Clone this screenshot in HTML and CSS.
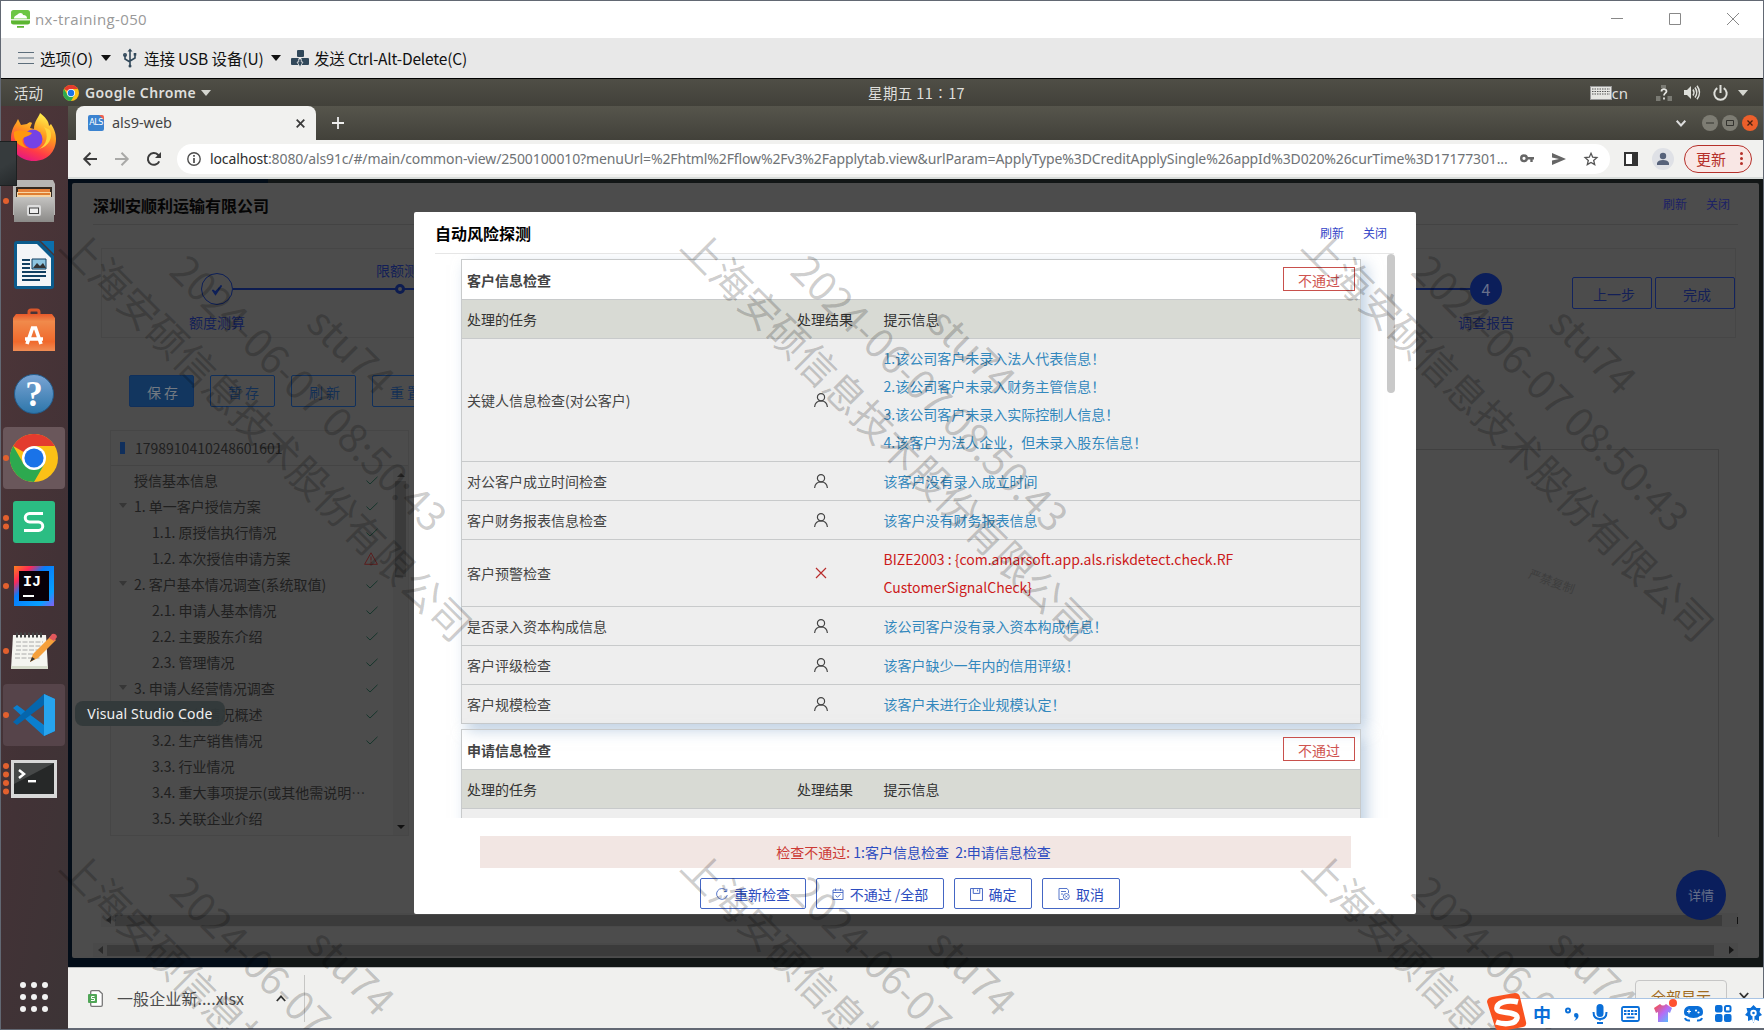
FILE: index.html
```html
<!DOCTYPE html>
<html lang="zh-CN">
<head>
<meta charset="utf-8">
<title>nx-training-050</title>
<link rel="stylesheet" href="styles.css">
</head>
<body>
<svg width="0" height="0" class="defs">
  <defs>
    <symbol id="user" viewBox="0 0 14 14"><circle cx="7" cy="4.2" r="3.6"/><path d="M.6 14c.2-3.600 2.700-6.200 6.400-6.200s6.200 2.600 6.400 6.200"/></symbol>
    <symbol id="tick" viewBox="0 0 12 9"><path d="M.5 4.6 4 8 11.5.8"/></symbol>
    <symbol id="chrome" viewBox="0 0 48 48"><circle cx="24" cy="24" r="24" fill="#fbc116"/><path d="M24 24 3.2 12A24 24 0 0 1 44.8 12L24 12z" fill="#e33b2e"/><path d="M3.2 12A24 24 0 0 0 24 48L34.4 30 24 24 13.6 30z" fill="#2da94f"/><circle cx="24" cy="24" r="12" fill="#fff"/><circle cx="24" cy="24" r="9.6" fill="#1a73e8"/></symbol>
    <linearGradient id="ff" x1="0.7" y1="0" x2="0.3" y2="1"><stop offset="0" stop-color="#fff44f"/><stop offset=".4" stop-color="#ff9a1f"/><stop offset=".75" stop-color="#ff3b47"/><stop offset="1" stop-color="#e31587"/></linearGradient>
    <linearGradient id="ij" x1="0" y1="0" x2="1" y2="1"><stop offset="0" stop-color="#fc801d"/><stop offset=".22" stop-color="#fe2857"/><stop offset=".4" stop-color="#087cfa"/><stop offset=".8" stop-color="#07a0ff"/><stop offset="1" stop-color="#8a5cf0"/></linearGradient>
    <linearGradient id="help" x1="0" y1="0" x2="0" y2="1"><stop offset="0" stop-color="#7aa4d4"/><stop offset="1" stop-color="#2d76aa"/></linearGradient>
    <linearGradient id="bag" x1="0" y1="0" x2="0" y2="1"><stop offset="0" stop-color="#e8592a"/><stop offset=".2" stop-color="#f08a4b"/><stop offset=".75" stop-color="#f0692c"/><stop offset="1" stop-color="#f08d55"/></linearGradient>
    <linearGradient id="cab" x1="0" y1="0" x2="0" y2="1"><stop offset="0" stop-color="#c4c3c1"/><stop offset="1" stop-color="#8b8a88"/></linearGradient>
    <linearGradient id="shirt" x1="0" y1="0" x2="1" y2="1"><stop offset="0" stop-color="#ff4a35"/><stop offset=".5" stop-color="#b66cf5"/><stop offset="1" stop-color="#3fd0ff"/></linearGradient>
  </defs>
</svg>

<div class="window">
  <header class="titlebar">
    <svg class="vm-icon" width="19" height="18" viewBox="0 0 19 18"><rect width="19" height="13" rx="2.500" fill="#6cc644"/><path d="M3 8.500c0-3 3-3 4-4.500 2-2 5-1 5 1 3 0 4 1.500 4 3.500z" fill="#fff"/><path d="M0 10h19v2a2.500 2.500 0 0 1-2.500 2.500h-14A2.500 2.500 0 0 1 0 12zM6 16h7v1.800H6z" fill="#5cb531"/><path d="M0 9.800h19" stroke="#fff" stroke-width="1.200"/></svg>
    <span class="vm-name">nx-training-050</span>
    <div class="caption-buttons">
      <svg width="12" height="14" viewBox="0 0 12 14"><path d="M0 6.5h12"/></svg>
      <svg width="12" height="14" viewBox="0 0 12 14"><path d="M.5 1.5h11v11H.5z"/></svg>
      <svg width="12" height="14" viewBox="0 0 12 14"><path d="M0 1 12 13M12 1 0 13"/></svg>
    </div>
  </header>

  <nav class="vm-menu">
    <svg class="m-burger" width="16" height="12" viewBox="0 0 16 12"><path d="M0 .5h16M0 6h16M0 11.5h16" stroke="#5d6e7c"/></svg>
    <span class="m-opt">选项(O)</span>
    <i class="tri"></i>
    <svg class="m-usb" width="14" height="20" viewBox="0 0 14 20" fill="none" stroke="#31485a" stroke-width="1.6"><path d="M7 3v14M2 7v4l5 3M12 7v3l-5 3"/><path d="M4.500 3.500 7 .5l2.500 3z" fill="#31485a" stroke="none"/><circle cx="7" cy="18" r="1.500" fill="#31485a" stroke="none"/><circle cx="2" cy="7" r="1.200"/><path d="M10.700 5h2.600v2.600h-2.600z" fill="#31485a" stroke="none"/></svg>
    <span class="m-dev">连接 USB 设备(U)</span>
    <i class="tri"></i>
    <svg class="m-key" width="18" height="17" viewBox="0 0 18 17" fill="#31485a"><rect x="6" width="7" height="7" rx="1"/><rect y="8" width="8" height="7" rx="1"/><rect x="10" y="8" width="8" height="7" rx="1"/><path d="M9 17 6 12h1.700V9h2.600v3H12z" stroke="#e8e8e8" stroke-width=".8"/></svg>
    <span class="m-cad">发送 Ctrl-Alt-Delete(C)</span>
  </nav>

  <div class="topbar">
    <span class="t-act">活动</span>
    <svg class="t-chrome" width="16" height="16"><use href="#chrome"/></svg>
    <span class="t-app">Google Chrome</span>
    <i class="tri light"></i>
    <span class="clock">星期五 11∶17</span>
    <div class="tray">
      <svg width="22" height="14" viewBox="0 0 22 14"><rect x=".5" y=".5" width="21" height="13" fill="#e6e6e2" stroke="#999"/><path d="M2 3h18M2 5.500h18M2 8h18" stroke="#555" stroke-dasharray="1.500 1"/></svg>
      <span class="cn">cn</span>
      <svg class="net" width="16" height="16" viewBox="0 0 16 16"><path d="M5 0h5v3H5zM0 11h4.500v5H0zM11.500 11H16v5h-4.500z" fill="#7a7a73"/><path d="M5.500 6.500c0-3 5-3 5-.3 0 2-2.500 2-2.500 4.300M8 12.500v2" fill="none" stroke="#e6e6e2" stroke-width="1.800"/></svg>
      <svg class="vol" width="16" height="15" viewBox="0 0 16 15"><path d="M0 5h3l4-4v13l-4-4H0z" fill="#dedfda"/><path d="M9 4.500q2 3 0 6M11 2.500q3.500 5 0 10M13 .7q5 6.800 0 13.600" fill="none" stroke="#dedfda" stroke-width="1.500"/></svg>
      <svg class="pwr" width="15" height="16" viewBox="0 0 15 16"><path d="M4.300 3.200a6.200 6.200 0 1 0 6.400 0M7.500 0v8" fill="none" stroke="#dedfda" stroke-width="2"/></svg>
      <i class="tri light"></i>
    </div>
  </div>

  <div class="desktop">
    <aside class="dock">
      <div class="slot"><svg width="46" height="48" viewBox="0 0 46 48"><path d="M23 48C9 48 0 38 0 26 0 19 2 14 5 10l2-4 3 6 6-1c2-2 4-2 5-1l-2 5 4 1C23 8 28 4 29 0c5 4 9 8 9 13l2-2c4 6 5 11 5 15 0 13-9 22-22 22z" fill="url(#ff)"/><circle cx="22" cy="26" r="9.500" fill="#7542e5"/><path d="M3 19c6-3 12-1 18 1-2 3-5 3-7 4-5 2-2 9 3 11-9-1-15-7-14-16z" fill="#ff980e"/><path d="M33 14c5 8 3 18-5 22 10-3 14-11 11-19z" fill="#ffd63a"/></svg></div>
      <div class="slot"><i class="dots one"></i><svg width="44" height="44" viewBox="0 0 44 44"><path d="M3 1h38l2 4v31H1V5z" fill="#b6b5b3"/><path d="M4 8h36v10H4z" fill="#33281f"/><path d="M6 10h32v8H6z" fill="#e5813a"/><path d="M5 13h34v5H5z" fill="#f8d5a4"/><path d="M6 14h32v2H6z" fill="#df7e30"/><path d="M2 18h40v25H2z" fill="url(#cab)"/><rect x="15" y="26" width="14" height="11" rx="2" fill="#ddd"/><rect x="17.500" y="29" width="9" height="5.500" fill="#eee" stroke="#444"/></svg></div>
      <div class="slot"><svg width="40" height="48" viewBox="0 0 40 48"><path d="M3 0h22l15 15v30a3 3 0 0 1-3 3H3a3 3 0 0 1-3-3V3a3 3 0 0 1 3-3z" fill="#0b5b8c"/><path d="M27 0h13v13z" fill="#0b6fab"/><path d="M3 3h20l14 14v28H3z" fill="#f3f5f7"/><path d="M8 19h8M8 23h8M8 27h8M8 31h24M8 35h24M8 39h18" stroke="#113f60" stroke-width="2"/><path d="M18 18h14v10H18z" fill="#8ec5e0" stroke="#113f60"/><path d="m19 27 4-5 3 3 3-3 3 5z" fill="#333"/></svg></div>
      <div class="slot"><svg width="42" height="44" viewBox="0 0 42 44"><path d="M16 11V4q0-2 2-2h6q2 0 2 2v7" fill="none" stroke="#d9562a" stroke-width="3"/><path d="M3 6h36l3 4v33H0V10z" fill="url(#bag)"/><path d="M14 36 19.500 20h3L28 36M12 31h18" fill="none" stroke="#fff" stroke-width="3.600"/></svg></div>
      <div class="slot"><svg width="40" height="40" viewBox="0 0 40 40"><circle cx="20" cy="20" r="19.500" fill="url(#help)" stroke="#235c8c"/><text x="20" y="32" text-anchor="middle" class="help-q">?</text></svg></div>
      <div class="slot on"><i class="dots one"></i><svg width="48" height="48"><use href="#chrome"/></svg></div>
      <div class="slot"><i class="dots two"></i><svg width="42" height="42" viewBox="0 0 42 42"><rect width="42" height="42" rx="3" fill="#2bbd83"/><path d="M30 12.500H16.500a4 4 0 0 0 0 8.500h9a4 4 0 0 1 0 8.500H11" fill="none" stroke="#fff" stroke-width="3"/></svg></div>
      <div class="slot"><i class="dots one"></i><svg width="40" height="40" viewBox="0 0 40 40"><path d="M0 0h40v40H0z" fill="url(#ij)"/><path d="M5 5h30v30H5z" fill="#080008"/><path d="M9 29h11v2H9z" fill="#fff"/><text x="9" y="20" class="ij">IJ</text></svg></div>
      <div class="slot"><i class="dots one"></i><svg width="46" height="38" viewBox="0 0 46 38"><path d="M2 3h33l2 34H0z" fill="#f5f5f0"/><path d="M0 34h37v3H0z" fill="#d8dccc"/><path d="M5 10h27M5 14h25M5 18h27M4 22h20M4 26h26" stroke="#aaa" stroke-dasharray="5 1.500"/><path d="M5 3h28" stroke="#444" stroke-width="5" stroke-dasharray="2 2"/><path d="m19 30 3-8L40 4l5 4-18 18z" fill="#f5a03c"/><path d="m38 6 3-4q4-1 5 3l-3 4z" fill="#e0585c"/><path d="m19 30 2-5 3 2z" fill="#333"/></svg></div>
      <div class="slot hover"><i class="dots one"></i><svg width="42" height="42" viewBox="0 0 42 42"><path d="m31 0 11 5v32l-11 5L0 14l4-3 27 20z" fill="#0a7fcf"/><path d="M31 0v11L4 31l-4-3z" fill="#0566ad"/><path d="m31 0 11 5v32l-11 5z" fill="#27a4ee"/></svg></div>
      <div class="slot"><i class="dots four"></i><svg width="46" height="38" viewBox="0 0 46 38"><path d="M0 0h46v38H0z" fill="#d8d8d8"/><path d="M3 3h40v31H3z" fill="#262828"/><path d="M3 3h40L3 24z" fill="#464848"/><path d="m8 10 5 4-5 4" fill="none" stroke="#fff" stroke-width="2.500"/><path d="M17 20h8v2.400h-8z" fill="#fff"/></svg></div>
      <svg class="apps" width="28" height="32" viewBox="0 0 28 32" fill="#f2f2f2"><g id="r"><circle cx="3" cy="4" r="3"/><circle cx="14" cy="4" r="3"/><circle cx="25" cy="4" r="3"/></g><use href="#r" y="12"/><use href="#r" y="24"/></svg>
    </aside>

    <div class="browser">
      <div class="tabs">
        <div class="tab">
          <span class="fav">ALS</span><span class="tab-name">als9-web</span>
          <svg width="9" height="9" viewBox="0 0 9 9"><path d="m.7.7 7.600 7.600M8.300.7.700 8.300" stroke="#3c3c3c" stroke-width="1.800"/></svg>
        </div>
        <svg class="plus" width="12" height="12" viewBox="0 0 12 12"><path d="M6 0v12M0 6h12" stroke="#eee" stroke-width="1.800"/></svg>
        <div class="wm">
          <svg width="10" height="7" viewBox="0 0 10 7"><path d="m.7.8 4.300 4.700L9.300.8" fill="none" stroke="#ddd" stroke-width="2"/></svg>
          <svg class="b" width="16" height="16" viewBox="0 0 16 16"><circle cx="8" cy="8" r="8" fill="#7d7c73"/><path d="M4 8h8" stroke="#33322e"/></svg>
          <svg width="16" height="16" viewBox="0 0 16 16"><circle cx="8" cy="8" r="8" fill="#7d7c73"/><path d="M4.500 5.500h7v5h-7z" fill="none" stroke="#33322e"/></svg>
          <svg width="16" height="16" viewBox="0 0 16 16"><circle cx="8" cy="8" r="8" fill="#ec5f2b"/><path d="m5.500 5.500 5 5m0-5-5 5" stroke="#4a2010" stroke-width="1.300"/></svg>
        </div>
      </div>
      <div class="address">
        <svg width="14" height="14" viewBox="0 0 14 14" fill="none" stroke="#3c3c3c" stroke-width="2"><path d="M14 7H1.500M7.500.8 1.300 7l6.200 6.200"/></svg>
        <svg class="fwd" width="14" height="14" viewBox="0 0 14 14" fill="none" stroke="#a9a9a7" stroke-width="2"><path d="M0 7h12.500M6.500.8 12.700 7l-6.200 6.200"/></svg>
        <svg class="rel" width="14" height="14" viewBox="0 0 14 14" fill="none"><path d="M12.200 9.300A5.900 5.900 0 1 1 11 2.800l2 2" stroke="#3c3c3c" stroke-width="2"/><path d="M14 0v6H8z" fill="#3c3c3c"/></svg>
        <div class="url">
          <svg width="14" height="14" viewBox="0 0 14 14"><circle cx="7" cy="7" r="6.200" fill="none" stroke="#4d4d4d" stroke-width="1.400"/><path d="M7 6v5M7 3v1.700" stroke="#4d4d4d" stroke-width="1.700"/></svg>
          <span class="url-text"><b>localhost</b>:8080/als91c/#/main/common-view/2500100010?menuUrl=%2Fhtml%2Fflow%2Fv3%2Fapplytab.view&amp;urlParam=ApplyType%3DCreditApplySingle%26appId%3D020%26curTime%3D17177301...</span>
          <svg class="u1" width="14" height="9" viewBox="0 0 14 9"><circle cx="4" cy="4.300" r="2.800" fill="none" stroke="#666" stroke-width="2.400"/><path d="M7 4.300h7M11.500 4.300V8" stroke="#666" stroke-width="2.400"/></svg>
          <svg class="u2" width="14" height="12" viewBox="0 0 14 12"><path d="M0 0 14 6 0 12V7.500L7 6 0 4.500z" fill="#666"/></svg>
          <svg class="u3" width="14" height="14" viewBox="0 0 14 14"><path d="m7 1.300 1.700 3.900 4.200.4-3.200 2.800 1 4.200L7 10.400l-3.700 2.200 1-4.200-3.200-2.800 4.200-.4z" fill="none" stroke="#555" stroke-width="1.300"/></svg>
        </div>
        <svg class="side" width="14" height="14" viewBox="0 0 14 14"><path d="M1 1h12v12H1z" fill="#fff" stroke="#333" stroke-width="2"/><path d="M8 1h5v12H8z" fill="#333"/></svg>
        <svg class="me" width="22" height="22" viewBox="0 0 22 22"><circle cx="11" cy="11" r="11" fill="#dfe1e6"/><circle cx="11" cy="8" r="3.200" fill="#56627a"/><path d="M5 17v-2q1-3 6-3t6 3v2z" fill="#56627a"/></svg>
        <div class="update">更新<svg width="3" height="13" viewBox="0 0 3 13" fill="#b5302a"><circle cx="1.500" cy="1.500" r="1.500"/><circle cx="1.500" cy="6.500" r="1.500"/><circle cx="1.500" cy="11.500" r="1.500"/></svg></div>
      </div>

      <main class="viewport">
        <section class="page">
          <div class="page-head"><h1>深圳安顺利运输有限公司</h1><a>刷新</a><a>关闭</a></div>
          <div class="steps">
            <div class="step first"><svg width="32" height="32" viewBox="0 0 32 32"><circle cx="16" cy="16" r="15.500" fill="none" stroke="#0d1f58"/><path d="m11.500 17 3 4.500 6-9-6 6.500z" fill="#0d1f58" stroke="#0d1f58" stroke-width="1.500"/></svg><span>额度测算</span></div>
            <div class="track"><div class="mid"><span>限额测算</span><i></i></div></div>
            <div class="step last"><b>4</b><span>调查报告</span></div>
            <div class="nav-btns"><span>上一步</span><span>完成</span></div>
          </div>
          <div class="actions"><span class="fill">保 存</span><span>暂 存</span><span>刷 新</span><span>重 置</span></div>
          <div class="body">
            <div class="tree">
              <div class="tree-head"><i></i>1798910410248601601</div>
              <div class="tree-body">
                <ul>
                  <li class="l1">授信基本信息<svg><use href="#tick"/></svg></li>
                  <li class="l1 open">1. 单一客户授信方案<svg><use href="#tick"/></svg></li>
                  <li>1.1. 原授信执行情况<svg><use href="#tick"/></svg></li>
                  <li>1.2. 本次授信申请方案<svg class="warn" viewBox="0 0 14 13"><path d="M7 .8 13.400 12.300H.6zM7 4.500V8.500M7 9.500v1.300"/></svg></li>
                  <li class="l1 open">2. 客户基本情况调查(系统取值)<svg><use href="#tick"/></svg></li>
                  <li>2.1. 申请人基本情况<svg><use href="#tick"/></svg></li>
                  <li>2.2. 主要股东介绍<svg><use href="#tick"/></svg></li>
                  <li>2.3. 管理情况<svg><use href="#tick"/></svg></li>
                  <li class="l1 open">3. 申请人经营情况调查<svg><use href="#tick"/></svg></li>
                  <li>3.1. 总体情况概述<svg><use href="#tick"/></svg></li>
                  <li>3.2. 生产销售情况<svg><use href="#tick"/></svg></li>
                  <li>3.3. 行业情况</li>
                  <li>3.4. 重大事项提示(或其他需说明⋯</li>
                  <li>3.5. 关联企业介绍</li>
                </ul>
                <div class="vbar"><i class="up"></i><b></b><i class="down"></i></div>
              </div>
            </div>
            <div class="frame"></div>
          </div>
          <div class="hbar h1"><i class="lf"></i><b></b><i class="stub"></i></div>
          <div class="hbar h2"><i class="lf"></i><b></b><i class="rt"></i></div>
        </section>
        <span class="detail">详情</span>
        <span class="nocopy">严禁复制</span>
      </main>

      <footer class="downloads">
        <svg width="15" height="17" viewBox="0 0 15 17"><path d="M4 .7h7l3.300 3V15q0 1.300-1.300 1.300H4Q2.700 16.300 2.700 15V2Q2.700.7 4 .7z" fill="#fff" stroke="#777" stroke-width="1.300"/><rect y="4" width="9" height="9" rx="1" fill="#50a657"/><path d="M6.500 6.500h-3v2h3v2h-3.500" fill="none" stroke="#fff"/></svg>
        <span class="file">一般企业新....xlsx</span>
        <svg class="chev" width="10" height="7" viewBox="0 0 10 7"><path d="m.8 6 4.200-4.700L9.200 6" fill="none" stroke="#333" stroke-width="1.800"/></svg>
        <i class="sep"></i>
        <span class="showall">全部显示</span>
        <svg class="close-dl" width="10" height="7" viewBox="0 0 10 7"><path d="M.8 1 5 5.700 9.200 1" fill="none" stroke="#333" stroke-width="1.800"/></svg>
      </footer>
    </div>
  </div>
</div>

<div class="modal">
  <div class="modal-head"><h2>自动风险探测</h2><a>刷新</a><a>关闭</a></div>
  <div class="modal-scroll">
    <div class="tables">
      <div class="check">
        <div class="cap">客户信息检查<span>不通过</span></div>
        <div class="row th"><span>处理的任务</span><span class="res">处理结果</span><span>提示信息</span></div>
        <div class="row"><span>关键人信息检查(对公客户)</span><svg><use href="#user"/></svg><p>1.该公司客户未录入法人代表信息！<br>2.该公司客户未录入财务主管信息！<br>3.该公司客户未录入实际控制人信息！<br>4.该客户为法人企业，但未录入股东信息！</p></div>
        <div class="row"><span>对公客户成立时间检查</span><svg><use href="#user"/></svg><p>该客户没有录入成立时间</p></div>
        <div class="row"><span>客户财务报表信息检查</span><svg><use href="#user"/></svg><p>该客户没有财务报表信息</p></div>
        <div class="row"><span>客户预警检查</span><svg class="x" viewBox="0 0 14 14"><path d="m2 1 10 10M12 1 2 11"/></svg><p class="err">BIZE2003 : {com.amarsoft.app.als.riskdetect.check.RF<br>CustomerSignalCheck}</p></div>
        <div class="row"><span>是否录入资本构成信息</span><svg><use href="#user"/></svg><p>该公司客户没有录入资本构成信息！</p></div>
        <div class="row"><span>客户评级检查</span><svg><use href="#user"/></svg><p>该客户缺少一年内的信用评级！</p></div>
        <div class="row"><span>客户规模检查</span><svg><use href="#user"/></svg><p>该客户未进行企业规模认定！</p></div>
      </div>
      <div class="check">
        <div class="cap">申请信息检查<span>不通过</span></div>
        <div class="row th"><span>处理的任务</span><span class="res">处理结果</span><span>提示信息</span></div>
        <div class="row"></div>
      </div>
    </div>
    <i class="thumb"></i>
  </div>
  <div class="fail"><em>检查不通过:</em>&nbsp;1:客户信息检查&nbsp; 2:申请信息检查</div>
  <div class="modal-btns">
    <span class="w1"><svg viewBox="0 0 12 12"><path d="M11.300 7A5.400 5.400 0 1 1 10 2.300M10.800.8v2.700H8.200"/></svg>重新检查</span>
    <span class="w2"><svg viewBox="0 0 12 12"><path d="M1 2h10v9.500H1zM1 4.500h10M3.500.5v2.500M8.500.5v2.500M3.500 7.500l2 1.800 3-3"/></svg>不通过 /全部</span>
    <span class="w3"><svg class="lg" viewBox="0 0 12 12"><path d="M.5.5h11v11H.5zM3 .5v4.500h6V.5M7 1.500V3"/></svg>确定</span>
    <span class="w3"><svg viewBox="0 0 12 12"><path d="M5 11.500H1V.5h8l1.500 2V5M3 3.500h5M3 6h2"/><circle cx="8.300" cy="8.500" r="3"/><path d="m7.300 7.500 2 2m0-2-2 2"/></svg>取消</span>
  </div>
</div>

<div class="watermarks">
  <div class="mark">stu74<br>2024-06-07 08:50:43<br>上海安硕信息技术股份有限公司</div>
  <div class="mark">stu74<br>2024-06-07 08:50:43<br>上海安硕信息技术股份有限公司</div>
  <div class="mark">stu74<br>2024-06-07 08:50:43<br>上海安硕信息技术股份有限公司</div>
  <div class="mark">stu74<br>2024-06-07 08:50:43<br>上海安硕信息技术股份有限公司</div>
  <div class="mark">stu74<br>2024-06-07 08:50:43<br>上海安硕信息技术股份有限公司</div>
  <div class="mark">stu74<br>2024-06-07 08:50:43<br>上海安硕信息技术股份有限公司</div>
</div>

<div class="side-tab"></div>
<div class="tooltip">Visual Studio Code</div>

<div class="ime">
  <svg class="ime-logo" width="40" height="38" viewBox="0 0 40 38"><path d="M5 4 28 0q4 0 5 4l6 25q1 4-3 5l-21 4q-5 1-7-4L0 9q0-4 5-5z" fill="#f9521f"/><path d="M31 9C20 6 9 10 10 16c1 5 21 2 20 9-1 6-12 7-21 4" fill="none" stroke="#fff" stroke-width="5.500"/></svg>
  <div class="ime-items">
    <span class="zh">中</span>
    <svg width="16" height="14" viewBox="0 0 16 14"><circle cx="4" cy="3.500" r="2" fill="none" stroke="#0a6fd8" stroke-width="2"/><path d="M10 8q0-2 2-2 2.500 0 2.500 3T10 14q2-2 2-3.500-2 0-2-2.500z" fill="#0a6fd8"/></svg>
    <svg width="16" height="20" viewBox="0 0 16 20"><rect x="4.500" width="7" height="13" rx="3.500" fill="#0a6fd8"/><path d="M1.500 8q0 7 6.500 7t6.500-7M8 15v1.500M5 19h6" fill="none" stroke="#0a6fd8" stroke-width="2"/></svg>
    <svg width="19" height="16" viewBox="0 0 19 16"><rect x="1" y="1" width="17" height="14" rx="1.500" fill="none" stroke="#0a6fd8" stroke-width="1.800"/><path d="M3 5h13M3 8h13" stroke="#0a6fd8" stroke-width="1.800" stroke-dasharray="2.500 1"/><path d="M5.500 11.500h8" stroke="#0a6fd8" stroke-width="1.800"/></svg>
    <svg class="shirt" width="24" height="24" viewBox="0 0 24 24"><path d="m1 9 6-4q3 3 6 0l6 4-2 5-2-1v10H5V13l-2 1z" fill="url(#shirt)"/><circle cx="20" cy="4" r="4" fill="#ff5230"/></svg>
    <svg width="19" height="16" viewBox="0 0 19 16"><path d="M5 0h9q5 1 5 6 0 4-3 4-2 2-6.500 2T3 10Q0 10 0 6 0 1 5 0z" fill="#0a6fd8"/><path d="M5 3.500v4M3 5.500h4" stroke="#fff" stroke-width="1.200"/><circle cx="12" cy="4.500" r="1.100" fill="#fff"/><circle cx="14.500" cy="6.500" r="1.100" fill="#fff"/><path d="M1 12q1 3 5 2.500M18 12q-1 3-5 2.500" fill="none" stroke="#0a6fd8" stroke-width="2"/></svg>
    <svg width="17" height="17" viewBox="0 0 17 17"><g fill="#0a6fd8"><rect width="7.500" height="7.500" rx="2"/><rect y="9" width="7.500" height="8" rx="2"/><rect x="9" y="9" width="7.500" height="8" rx="2"/></g><rect x="10" y="1" width="5.500" height="5.500" rx="1.500" fill="none" stroke="#0a6fd8" stroke-width="2"/></svg>
    <svg width="17" height="18" viewBox="0 0 17 18"><path d="m8.500 0 3 3h4l-1 4 2.500 3-3 1.500L14 16l-4-1.500L8.500 18 7 14.500 3 16l0-4.500L0 10l2.500-3-1-4h4z" fill="#0a6fd8"/><circle cx="8.500" cy="8" r="3.200" fill="#fff"/><path d="M8.500 8v9" stroke="#fff" stroke-width="2"/><circle cx="8.500" cy="8" r="1.300" fill="#0a6fd8"/></svg>
  </div>
</div>
</body>
</html>
```
FILE: styles.css
```css
* { box-sizing: border-box; }
html, body { margin: 0; height: 1030px; overflow: hidden; }
body {
  font: 14px/20px "Noto Sans CJK SC", sans-serif;
  background: #626873;
  position: relative;
  width: 1764px;
}
svg { flex: none; display: block; overflow: visible; }
.defs { position: absolute; }
i, em { font-style: normal; }
.tri { border: 5px solid transparent; border-top: 6px solid #111; border-bottom: 0; flex: none; }
.tri.light { border-top-color: #d5d6d0; }

.window { height: 1029px; padding: 1px 1px 0; display: flex; flex-direction: column; }

/* remote console window chrome */
.titlebar { height: 37px; background: #fff; display: flex; align-items: center; padding: 0 24px 0 10px; }
.vm-icon { margin-top: -1px; }
.vm-name { margin: -2px 0 0 5px; color: #999; font: 15px "Open Sans", sans-serif; letter-spacing: .38px; }
.caption-buttons { margin-left: auto; display: flex; gap: 46px; fill: none; stroke: #888; margin-top: -1px; }
.vm-menu { height: 41px; background: #e8e8e8; border-bottom: 1px solid #000; display: flex; align-items: center; padding: 0 17px; font-size: 15.500px; color: #111; white-space: nowrap; }
.m-opt { margin-left: 6px; width: 61px; }
.m-usb { margin: 0 7px 0 12px; }
.m-dev { width: 127px; letter-spacing: -.12px; }
.m-key { margin: 0 5px 0 10px; }
.m-cad { letter-spacing: -.18px; }

/* desktop top bar */
.topbar { height: 27px; background: linear-gradient(#4f4e46, #42413a); display: flex; align-items: center; color: #dfdfdc; padding: 0 15px 0 13px; position: relative; }
.t-act { width: 49px; font-size: 14.500px; }
.t-app { font: 600 14px "Noto Sans", sans-serif; margin: 0 5px 0 6px; letter-spacing: .4px; }
.clock { position: absolute; left: 867px; top: 4px; font-size: 14.500px; letter-spacing: .4px; }
.tray { margin-left: auto; display: flex; align-items: center; }
.cn { font: 15px "Noto Sans", sans-serif; margin: 0 28px 0 0; }
.vol { margin: 0 13px 0 12px; }
.pwr { margin-right: 10px; }

.desktop { flex: 1; display: flex; min-height: 0; }

/* launcher */
.dock { width: 67px; background: linear-gradient(100deg, #4f3639, #423236 60%, #3c3436); display: flex; flex-direction: column; }
.slot { height: 62px; width: 62px; margin: 0 0 2.200px 2px; border-radius: 4px; display: flex; align-items: center; justify-content: center; position: relative; }
.slot.on { background: #6a575b; }
.slot.hover { background: #56444a; }
.dots { position: absolute; left: 0; top: 50%; width: 6px; height: 6px; margin-top: -3px; border-radius: 3px; background: #e2602e; }
.two { margin-top: -7px; box-shadow: 0 8.500px #e2602e; }
.four { margin-top: -16px; box-shadow: 0 8.500px #e2602e, 0 17px #e2602e, 0 25.500px #e2602e; }
.help-q { font: bold 35px "Liberation Serif", serif; fill: #fff; }
.ij { font: bold 15px "Liberation Mono", monospace; fill: #fff; }
.apps { margin: auto 0 16px 19px; }

/* browser */
.browser { flex: 1; display: flex; flex-direction: column; min-width: 0; }
.tabs { height: 34px; background: linear-gradient(#56554c, #42413a); display: flex; align-items: center; padding: 0 5px 0 8px; }
.tab { width: 240px; height: 34px; border-radius: 8px 8px 0 0; background: #f1f1ef; display: flex; align-items: center; padding: 0 11px 0 12px; }
.fav { width: 16px; height: 16px; border-radius: 2px; background: linear-gradient(225deg, #f0604d 3px, #3b83d0 4px); color: #fff; font: 8px/16px "DejaVu Sans", sans-serif; text-align: center; letter-spacing: -.5px; }
.tab-name { margin: -2px auto 0 8px; font: 14.500px "Noto Sans", sans-serif; color: #444; letter-spacing: -.05px; }
.plus { margin-left: 16px; }
.wm { margin-left: auto; display: flex; align-items: center; gap: 4px; }
.wm .b { margin-left: 12px; }
.address { height: 39px; background: #f1f1ef; border-bottom: 2px solid #d8dcda; display: flex; align-items: center; padding: 0 11px 0 15px; }
.fwd { margin-left: 18px; }
.rel { margin-left: 18px; }
.url { margin-left: 16px; width: 1433px; height: 30px; border-radius: 15px; background: #fff; display: flex; align-items: center; padding: 0 12px 0 10px; }
.url-text { margin-left: 9px; width: 1310px; font: 14px "Noto Sans", sans-serif; letter-spacing: -.128px; color: #6f7376; white-space: nowrap; }
.url-text b { font-weight: 400; color: #2d2d2d; }
.u2 { margin-left: 18px; }
.u3 { margin-left: auto; }
.side { margin-left: 14px; }
.me { margin-left: 14px; }
.update { margin-left: auto; width: 68px; height: 28px; border: 1px solid #b5302a; border-radius: 14px; background: #f9e7e5; color: #b5302a; font-size: 15px; display: flex; align-items: center; justify-content: space-between; padding: 0 8px 0 11px; }

/* dimmed page behind the dialog */
.viewport { height: 788px; padding: 4px 4px 9px; background: linear-gradient(90deg, #030d18 200px, #121616 200px); position: relative; }
.page { height: 775px; border-radius: 2px; background: #4c4c4c; color: #202020; padding: 0 21px 0 21px; display: flex; flex-direction: column; }
.page-head { height: 42px; border-bottom: 1px solid #434343; display: flex; align-items: center; gap: 19px; margin-bottom: 23px; padding-right: 8px; }
.page-head h1 { margin: 2px auto 0 0; font-size: 16px; color: #050505; }
.page-head a { font-size: 12px; color: #1b2166; margin-top: 1px; }
.steps { height: 90px; margin: 0 2px 0 8px; border: 1px solid #464646; display: flex; padding: 24px 0 0 87px; color: #131f57; }
.step { width: 56px; display: flex; flex-direction: column; align-items: center; gap: 7px; }
.step b { width: 32px; height: 32px; border-radius: 50%; background: #0b1e5a; color: #68708a; font: 16px/32px "Noto Sans CJK SC", sans-serif; text-align: center; }
.track { width: 1237px; height: 2px; margin: 15px -12px 0; background: #0d1c50; }
.mid { width: 56px; margin-left: 143px; margin-top: -28px; }
.mid span { display: block; height: 24px; }
.mid i { display: block; width: 10px; height: 10px; border: 3px solid #0d1c50; border-radius: 50%; margin: 0 0 0 19px; background: #4c4c4c; }
.nav-btns { margin-left: auto; display: flex; gap: 3px; padding-top: 4px; }
.nav-btns span { width: 80px; height: 32px; border: 1px solid #12235e; border-radius: 2px; text-align: center; line-height: 33px; padding-left: 4px; }
.actions { display: flex; gap: 16px; margin: 37px 0 23px 36px; }
.actions span { width: 65px; height: 32px; border: 1px solid #10305c; border-radius: 2px; text-align: center; line-height: 33px; color: #143055; padding-left: 2px; }
.actions .fill { background: #12365f; color: #737a82; }
.body { display: flex; gap: 11px; height: 406px; margin-left: 17px; }
.tree { width: 299px; border: 1px solid #464646; }
.tree-head { height: 35px; border-bottom: 1px solid #444; display: flex; align-items: center; padding-left: 9px; }
.tree-head i { width: 5px; height: 12px; background: #102f5c; margin-right: 10px; }
.tree-body { display: flex; height: 369px; }
.tree ul { list-style: none; margin: 0; padding: 1px 15px 0 0; width: 283px; }
.tree li { height: 26px; line-height: 25px; padding-left: 41px; display: flex; justify-content: space-between; align-items: center; position: relative; white-space: nowrap; }
.tree .l1 { padding-left: 23px; }
.tree .open::before { content: ""; position: absolute; left: 8px; top: 10px; border: 4px solid transparent; border-top: 5px solid #363636; border-bottom: 0; }
.tree svg { width: 12px; height: 9px; fill: none; stroke: #17362c; }
.tree .warn { width: 14px; height: 13px; stroke: #5a1d1d; }
.vbar { width: 15px; background: #494949; display: flex; flex-direction: column; align-items: center; padding: 7px 0 6px; }
.vbar i, .hbar i { width: 0; height: 0; border: 4px solid transparent; }
.vbar .up { border-bottom-color: #252525; border-top: 0; }
.vbar .down { border-top: 4px solid #111; border-bottom: 0; margin-top: auto; }
.vbar b { width: 11px; height: 96px; background: #3b3b3b; margin-top: 4px; }
.frame { width: 1299px; height: 388px; margin-top: 19px; border: 1px solid #404040; border-bottom: 0; }
.hbar { height: 14px; background: #494949; display: flex; align-items: center; }
.hbar b { height: 11px; background: #3b3b3b; width: 1607px; margin-left: 4px; }
.hbar .lf { border-left: 0; border-right: 5px solid #2a2a2a; margin-left: 5px; }
.hbar .rt { border-right: 0; border-left: 5px solid #151515; margin: 0 4px 0 auto; }
.hbar .stub { border: 0; width: 1px; height: 7px; background: #111; margin-left: auto; }
.h1 { margin: 77px 0 0 8px; }
.h2 { margin-top: 16px; }
.detail { position: absolute; left: 1608px; top: 691px; width: 50px; height: 50px; border-radius: 50%; background: #0a1e5c; color: #656e88; font-size: 13px; line-height: 50px; text-align: center; }
.nocopy { position: absolute; left: 1460px; top: 392px; font-size: 12px; color: #3e3e3e; transform: rotate(20deg); }

.downloads { height: 61px; background: #f0f0ee; border-top: 1px solid #bbb; display: flex; align-items: center; padding: 0 14px 0 20px; }
.file { font-size: 16px; letter-spacing: .1px; margin-left: 14px; color: #4d4d4d; width: 149px; white-space: nowrap; }
.chev { margin-left: 10px; }
.sep { width: 1px; height: 47px; background: #c6c6c4; margin-left: 18px; }
.showall { margin: 0 12px 0 auto; width: 92px; height: 36px; border: 1px solid #c6c6c6; border-radius: 4px; color: #a06a20; font-size: 15px; line-height: 31px; text-align: center; }
.close-dl { margin-top: -6px; }

/* risk check dialog */
.modal { position: absolute; left: 414px; top: 212px; width: 1002px; height: 702px; border-radius: 2px; background: #fff; color: #444; }
.modal-head { height: 42px; margin: 0 22px 0 21px; border-bottom: 1px solid #e6e6e6; display: flex; align-items: center; gap: 19px; padding-right: 7px; }
.modal-head h2 { margin: 1px auto 0 0; font-size: 16px; color: #000; }
.modal-head a { font-size: 12px; color: #3546c8; }
.modal-scroll { height: 564px; overflow: hidden; margin: 0 21px 0 21px; display: flex; justify-content: space-between; align-items: flex-start; }
.tables { width: 900px; margin: 5px 0 0 26px; }
.check { border: 1px solid #c8cacb; margin-bottom: 5px; box-shadow: 6px 6px 14px rgba(150, 178, 208, .6); }
.cap { height: 39px; display: flex; align-items: center; justify-content: space-between; padding: 1px 5px 0 5px; font-weight: 700; }
.cap span { width: 72px; height: 24px; margin-top: -2px; border: 1px solid #c8504c; color: #cf5450; font-weight: 400; text-align: center; line-height: 25px; }
.row { min-height: 39px; background: #eee; border-top: 1px solid #c8cacb; display: grid; grid-template-columns: 325px 91.500px 1fr; align-items: center; padding: 5px 0 5px 5px; }
.row.th { background: #d8dad4; color: #333; }
.res { padding-left: 5px; }
.row svg { width: 14px; height: 14px; margin-left: 22px; fill: none; stroke: #444; stroke-width: 1.200; }
.row .x { stroke: #b82c2c; margin-top: 1px; }
.row p { margin: 0; line-height: 28px; color: #3388bd; }
.row .err { color: #cc1a1a; }
.row:not(.th):nth-child(3) { min-height: 123px; }
.thumb { width: 8px; height: 139px; border-radius: 4px; background: #c9c9c9; }
.fail { margin: 18px 65px 10px 66px; padding-right: 4px; height: 32px; background: #f2e6e3; text-align: center; line-height: 33px; color: #2c4cc0; }
.fail em { color: #cc3a35; }
.modal-btns { display: flex; gap: 10px; margin-left: 286px; }
.modal-btns span { height: 31px; border: 1px solid #4466c4; border-radius: 2px; display: flex; align-items: center; justify-content: center; gap: 6px; color: #2c4cc0; padding-top: 1px; }
.modal-btns svg { width: 12px; height: 12px; fill: none; stroke: #4466c4; stroke-width: .9; }
.modal-btns .lg { width: 13px; height: 13px; }
.w1 { width: 106px; }
.w2 { width: 128px; }
.w3 { width: 78px; }

/* repeated diagonal watermark, free over the screen */
.watermarks { position: absolute; left: 0; top: 81px; width: 1764px; height: 948px; display: grid; grid-template-columns: repeat(3, 621px); grid-auto-rows: 621px; overflow: hidden; pointer-events: none; }
.mark { display: grid; align-content: center; text-align: center; white-space: nowrap; transform: rotate(45deg); font-size: 40px; line-height: 60px; color: rgba(0, 0, 0, .2); display: block; }

.side-tab { position: absolute; left: 0; top: 141px; width: 17px; height: 45px; background: linear-gradient(150deg, #363b3d 50%, #25292b); border: 1px solid #1d2021; border-left: 0; }
.tooltip { position: absolute; left: 75px; top: 701px; width: 150px; height: 25px; border-radius: 8px; background: rgba(50, 57, 58, .93); color: #f0f0f0; font: 14px/25px "Noto Sans", sans-serif; letter-spacing: .18px; text-align: center; }

/* input method bar */
.ime { position: absolute; left: 1487px; top: 993px; width: 277px; height: 37px; display: flex; }
.ime-items { flex: 1; margin: 5px 0 2px -12px; padding: 0 2px 0 18px; background: #fff; border-top: 1px solid #a9c4e4; display: flex; align-items: center; justify-content: space-between; }
.ime-logo { position: relative; z-index: 1; }
.zh { font-size: 18px; font-weight: 700; color: #0a6fd8; }
.shirt { margin: -6px -6px 0 0; }
```
